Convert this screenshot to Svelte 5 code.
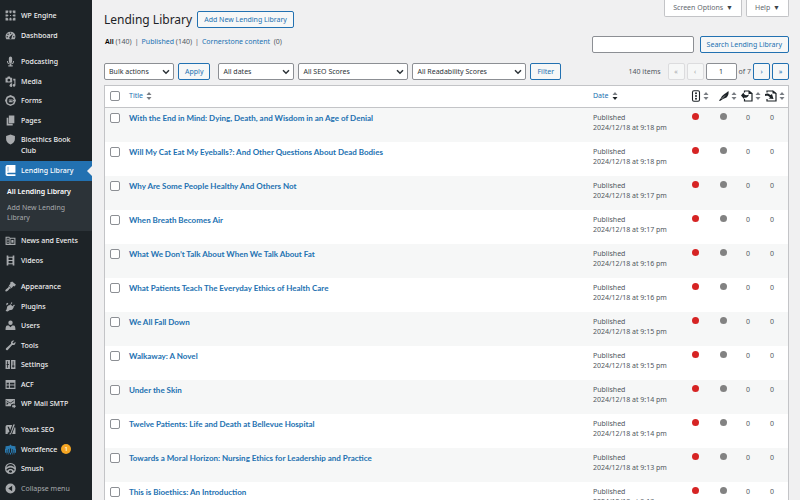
<script>
  const menuGroups = [
    [
      { label: 'WP Engine', icon: 'wpengine' },
      { label: 'Dashboard', icon: 'dashboard' }
    ],
    [
      { label: 'Podcasting', icon: 'mic' },
      { label: 'Media', icon: 'media' },
      { label: 'Forms', icon: 'forms' },
      { label: 'Pages', icon: 'pages' },
      { label: 'Bioethics Book Club', icon: 'shield' },
      {
        label: 'Lending Library',
        icon: 'book',
        current: true,
        children: ['All Lending Library', 'Add New Lending Library']
      },
      { label: 'News and Events', icon: 'news' },
      { label: 'Videos', icon: 'video' }
    ],
    [
      { label: 'Appearance', icon: 'brush' },
      { label: 'Plugins', icon: 'plug' },
      { label: 'Users', icon: 'user' },
      { label: 'Tools', icon: 'wrench' },
      { label: 'Settings', icon: 'settings' },
      { label: 'ACF', icon: 'acf' },
      { label: 'WP Mail SMTP', icon: 'mail' }
    ],
    [
      { label: 'Yoast SEO', icon: 'yoast' },
      { label: 'Wordfence', icon: 'wordfence', badge: 1 },
      { label: 'Smush', icon: 'smush' }
    ]
  ];

  // all drawn on a 20x20 grid
  const icons = {
    wpengine: 'M1 1h5v3l-2 2H1zM8 1h4v3l-1 2H9L8 4zM14 1h5v5h-3l-2-2zM1 8h3l2 1v2l-2 1H1zM9 9h2v2H9zM19 8h-3l-2 1v2l2 1h3zM1 14h3l2 2v3H1zM8 19v-3l1-2h2l1 2v3zM14 19v-3l2-2h3v5z',
    dashboard: 'M10 3a9 9 0 0 0-9 9c0 2 .5 3.500 1.500 5h15c1-1.500 1.500-3 1.500-5a9 9 0 0 0-9-9zm0 1.500a1.200 1.200 0 1 1 0 2.500 1.200 1.200 0 0 1 0-2.500zM5.500 6.500a1.200 1.200 0 1 1 0 2.500 1.200 1.200 0 0 1 0-2.500zm9 0-2.500 6.500a2.200 2.200 0 1 1-3-1zM4 11a1.200 1.200 0 1 1 0 2.500A1.200 1.200 0 0 1 4 11zm12 0a1.200 1.200 0 1 1 0 2.500 1.200 1.200 0 0 1 0-2.500z',
    mic: 'M10 1a3 3 0 0 1 3 3v6a3 3 0 0 1-6 0V4a3 3 0 0 1 3-3zM3.500 9h1.800a4.700 4.700 0 0 0 9.400 0h1.800a6.500 6.500 0 0 1-5.500 6.400V17h3v2H6v-2h3v-1.600A6.500 6.500 0 0 1 3.500 9z',
    media: 'M1 3h3l1-2h4l1 2h3v9H1zm6 2a2.500 2.500 0 1 0 0 5 2.500 2.500 0 0 0 0-5zM15 5h4v12a2.500 2.500 0 1 1-2-2.500V8h-2zM9 14h2v-1h2v4.500A2.300 2.300 0 1 1 9 16z',
    forms: 'M10 0l7 3 3 7-3 7-7 3-7-3-3-7 3-7zM10 4a6 6 0 0 0-6 6 6 6 0 0 0 12 1.500H9V9h7a6 6 0 0 0-6-5zM7 8h7v1.500H8v2h4V10h2v3H7z',
    pages: 'M7 1h10v14H7zM3 5h3v11h8v3H3z',
    shield: 'M10 1l8 2.500V9c0 5-3 8-8 10-5-2-8-5-8-10V3.500z',
    book: 'M3 0h16v14H5.500a1.500 1.500 0 0 0 0 3H19v3H4.500A3.500 3.500 0 0 1 1 16V2.500zM5 3v9h1V3z',
    news: 'M1 3h7l1 2h10v13H1zm2 2v11h5V5zm7 2v9h7V7zM4 7h3v1.500H4zm0 3h3v1.500H4zm0 3h3v1.500H4zM11.500 9h4v5h-4z',
    video: 'M3 1h3v2h8V1h3v18h-3v-2H6v2H3zm3.500 4v4h7V5zm0 6v4h7v-4z',
    brush: 'M9 3l4-2 7 6-3 3-2-1-3 4-5-5 3-3zM7 9l4 4-3 1c-2 3-4 5-6 5s-2-2 0-4l4-3z',
    plug: 'M12 2l1.500 1.500-3 3 3 3 3-3L18 8l-3 3 1 1-3 4-5 1-3 2-4-1 2-3 1-5 4-3 1 1zM2 5l3-2 1 2-3 3z',
    user: 'M10 1a4 4 0 1 1 0 8 4 4 0 0 1 0-8zM4 10h3l3 3 3-3h3c2 0 3 3 3 8H1c0-5 1-8 3-8z',
    wrench: 'M17 1l-3.500 3.500 2 2L19 3c1 4-2 7-6 6l-8 9c-2 2-5-1-3-3l9-8c-1-4 2-7 6-6z',
    settings: 'M1 2h8v16H1zm10 0h8v16h-8zM4 4v5H3v2h1v5h1.500v-5H7V9H5.500V4zm10 0v8h-1v2h1v2h1.500v-2H17v-2h-1.500V4z',
    acf: 'M1 2h18v16H1zm2 5v3h4V7zm6 0v3h8V7zm-6 5v4h4v-4zm6 0v4h8v-4z',
    mail: 'M1 2h17v9l-2-1-5 2v3H1zm1.500 2v1.500L9.500 10l7-4.500V4l-7 4.500zM3 7.500V13l3.500-3zM13 13h3v-2l4 4-4 4v-2h-3z',
    yoast: 'M4 2h9l-3.500 9L7 5H4.500l3.500 8c-.5 2-1 2.500-3 2.500V18H1V5a3 3 0 0 1 3-3zM15 1h3l-6 15c-.7 2-1.500 3-3.500 3.500V17c2-.5 2-1.500 2.500-3zM17.500 6c1 0 1.500 1 1.500 2v10h-6z',
    wordfence: 'M10 1l2 2 7 1v4l1 1v10h-3v-8h-1v8h-2V9h-1v10h-2V8H9v11H7V9H6v10H4v-8H3v8H0V9l1-1V4l7-1zM0 16h20v3H0z',
    smush: 'M10 0a10 10 0 1 1 0 20 10 10 0 0 1 0-20zm0 2a8 8 0 0 0-7.500 6c4-4 11-4 15 0A8 8 0 0 0 10 2zm0 6c-3 0-5.500 1.500-7.500 4l1.200 2.500C7 10 13 10 16.300 14.500l1.200-2.500C15.500 9.500 13 8 10 8zm0 5a3 3 0 0 0-3 3.500l3 1 3-1a3 3 0 0 0-3-3.500z',
    collapse: 'M10 1a9 9 0 1 1 0 18 9 9 0 0 1 0-18zm3 4l-7 5 7 5z'
  };

  const books = [
    ['With the End in Mind: Dying, Death, and Wisdom in an Age of Denial', '9:18'],
    ['Will My Cat Eat My Eyeballs?: And Other Questions About Dead Bodies', '9:18'],
    ['Why Are Some People Healthy And Others Not', '9:17'],
    ['When Breath Becomes Air', '9:17'],
    ['What We Don’t Talk About When We Talk About Fat', '9:16'],
    ['What Patients Teach The Everyday Ethics of Health Care', '9:16'],
    ['We All Fall Down', '9:15'],
    ['Walkaway: A Novel', '9:15'],
    ['Under the Skin', '9:14'],
    ['Twelve Patients: Life and Death at Bellevue Hospital', '9:14'],
    ['Towards a Moral Horizon: Nursing Ethics for Leadership and Practice', '9:13'],
    ['This is Bioethics: An Introduction', '9:13']
  ];
</script>

{#snippet menuIcon(name)}
  <svg class="menu-icon {name}" viewBox="0 0 20 20" aria-hidden="true">
    <path d={icons[name]} fill="currentColor" fill-rule="evenodd" />
  </svg>
{/snippet}

{#snippet sorter(active)}
  <svg class="sorter" class:active viewBox="0 0 6 10" aria-hidden="true">
    <path class="up" d="M3 1l2.500 3h-5z" />
    <path class="down" d="M3 9l2.500-3h-5z" />
  </svg>
{/snippet}

{#snippet picker(name, label, cls)}
  <span class="picker {cls}">
    <select aria-label={name}><option>{label}</option></select>
    <svg viewBox="0 0 8 6" aria-hidden="true"><path d="M1 1.200l3 3 3-3" /></svg>
  </span>
{/snippet}

<div class="admin">
  <nav class="sidebar" aria-label="Main menu">
    {#each menuGroups as group}
      <ul class="menu">
        {#each group as item}
          <li class:current={item.current}>
            <a class="menu-link" href="#top">
              {@render menuIcon(item.icon)}
              <span class="menu-name">{item.label}</span>
              {#if item.badge}<span class="badge">{item.badge}</span>{/if}
            </a>
            {#if item.children}
              <ul class="submenu">
                {#each item.children as child, i}
                  <li><a href="#top" class:selected={i === 0}>{child}</a></li>
                {/each}
              </ul>
            {/if}
          </li>
        {/each}
      </ul>
    {/each}
    <button class="menu-link collapse">
      {@render menuIcon('collapse')}
      <span class="menu-name">Collapse menu</span>
    </button>
  </nav>

  <main>
    <header class="top">
      <div class="heading">
        <div class="title-row">
          <h1>Lending Library</h1>
          <a class="button" href="#top">Add New Lending Library</a>
        </div>
        <ul class="views">
          <li><a class="all" href="#top">All</a> (140)</li>
          <li><a href="#top">Published</a> (140)</li>
          <li><a href="#top">Cornerstone content</a> &nbsp;(0)</li>
        </ul>
      </div>
      <div class="tools">
        <div class="screen-meta">
          <button>Screen Options <span>▼</span></button>
          <button>Help <span>▼</span></button>
        </div>
        <form class="search">
          <input type="search" aria-label="Search Lending Library" />
          <button type="button" class="button">Search Lending Library</button>
        </form>
      </div>
    </header>

    <div class="tablenav">
      {@render picker('Bulk actions', 'Bulk actions', 'bulk')}
      <button class="button">Apply</button>
      {@render picker('Filter by date', 'All dates', 'dates')}
      {@render picker('Filter by SEO score', 'All SEO Scores', 'seo')}
      {@render picker('Filter by readability', 'All Readability Scores', 'readability')}
      <button class="button">Filter</button>
      <div class="pagination">
        <span class="count">140 items</span>
        <button class="page" disabled>«</button>
        <button class="page" disabled>‹</button>
        <input aria-label="Current page" value="1" />
        <span class="of">of 7</span>
        <button class="page">›</button>
        <button class="page">»</button>
      </div>
    </div>

    <table>
      <colgroup>
        <col class="c-check" /><col /><col class="c-date" /><col class="c-score" />
        <col class="c-link" /><col class="c-link" /><col class="c-link" />
      </colgroup>
      <thead>
        <tr>
          <th><input type="checkbox" aria-label="Select all" /></th>
          <th><a href="#top">Title {@render sorter(false)}</a></th>
          <th><a href="#top">Date {@render sorter(true)}</a></th>
          <th>
            <a href="#top" aria-label="SEO score">
              <svg class="col-icon" viewBox="0 0 20 24">
                <rect x="3" y="1.500" width="14" height="21" rx="3" fill="none" stroke="currentColor" stroke-width="2.200" />
                <circle cx="10" cy="6.500" r="2" /><circle cx="10" cy="12" r="2" /><circle cx="10" cy="17.500" r="2" />
              </svg>
              {@render sorter(false)}
            </a>
          </th>
          <th>
            <a href="#top" aria-label="Readability score">
              <svg class="col-icon" viewBox="0 0 20 24">
                <path d="M19 2c1 6-1 10-4 13l-7 3-6 4-2-1 4-5c1-5 6-7 10-10z" />
                <path d="M5 18l7-7" stroke="#fff" stroke-width="1" />
              </svg>
              {@render sorter(false)}
            </a>
          </th>
          <th>
            <a href="#top" aria-label="Outgoing links">
              <svg class="col-icon wide" viewBox="0 0 24 24">
                <path d="M7 5V2h9l6 5v15H7v-4" fill="none" stroke="currentColor" stroke-width="2.400" />
                <path d="M15 1v7h8zM0 11l5-6 1 3c3 3 6 3 10 1-1 5-5 7-9 6l-1 3z" />
              </svg>
              {@render sorter(false)}
            </a>
          </th>
          <th>
            <a href="#top" aria-label="Received links">
              <svg class="col-icon wide" viewBox="0 0 24 24">
                <path d="M4 5V2h12l6 5v15H4v-4" fill="none" stroke="currentColor" stroke-width="2.400" />
                <path d="M15 1v6h8zM0 8c4-2 8-1 11 2l3-2 3 10-10-1 3-2c-2-3-5-4-10-3z" />
              </svg>
              {@render sorter(false)}
            </a>
          </th>
        </tr>
      </thead>
      <tbody>
        {#each books as [title, time]}
          <tr>
            <td><input type="checkbox" aria-label="Select {title}" /></td>
            <td><a class="row-title" href="#top">{title}</a></td>
            <td class="date">Published<br />2024/12/18 at {time} pm</td>
            <td><span class="dot bad"></span></td>
            <td><span class="dot"></span></td>
            <td class="num">0</td>
            <td class="num">0</td>
          </tr>
        {/each}
      </tbody>
    </table>
  </main>
</div>

<style>
  :global(body) {
    background: #f0f0f1;
  }

  .admin,
  .admin * {
    box-sizing: border-box;
  }

  .admin {
    display: flex;
    height: 100vh;
    overflow: hidden;
    font-family: 'Noto Sans', 'Open Sans', sans-serif;
    font-size: 7px;
    line-height: 10px;
    color: #50575e;
  }

  a {
    color: #2271b1;
    text-decoration: none;
  }

  ul {
    list-style: none;
    margin: 0;
    padding: 0;
  }

  button,
  input,
  select {
    font: inherit;
    margin: 0;
  }

  /* sidebar */
  .sidebar {
    flex: 0 0 92px;
    padding-top: 6px;
    background: #1d2327;
  }

  .menu + .menu {
    margin-top: 7px;
  }

  .menu + .menu:last-of-type {
    margin-top: 6px;
  }

  .menu-link {
    position: relative;
    display: flex;
    align-items: flex-start;
    width: 100%;
    min-height: 20px;
    padding: 4px 8px 5px 5px;
    border: 0;
    background: none;
    color: #f0f0f1;
    font-size: 7px;
    font-weight: 500;
    line-height: 11px;
    text-align: left;
  }

  .menu > li:nth-child(even):not(.current) .menu-link {
    min-height: 19px;
    padding-bottom: 4px;
  }

  .menu-icon {
    flex: none;
    width: 11px;
    height: 11px;
    margin-right: 5px;
    color: #a7aaad;
  }

  .current .menu-link {
    background: #2271b1;
    color: #fff;
  }

  .current .menu-link::after {
    content: '';
    position: absolute;
    right: 0;
    top: 5px;
    border: 5px solid transparent;
    border-left: 0;
    border-right: 5px solid #f0f0f1;
  }

  .current .menu-icon {
    color: #fff;
  }

  .wordfence {
    color: #2a7ab0;
  }

  .badge {
    width: 10px;
    height: 10px;
    margin-left: 4px;
    border-radius: 5px;
    background: #f5a623;
    color: #fff;
    font-size: 6px;
    line-height: 10px;
    text-align: center;
  }

  .submenu {
    padding: 3px 0 5px;
    background: #2c3338;
  }

  .submenu a {
    display: block;
    padding: 3px 20px 3px 7px;
    color: #a7aaad;
  }

  .submenu .selected {
    padding-right: 0;
    color: #fff;
    font-weight: 600;
  }

  .collapse {
    color: #a7aaad;
    font-weight: 400;
  }

  /* page header */
  main {
    flex: 1;
    min-width: 0;
    padding: 0 11px 0 12px;
  }

  .top {
    display: flex;
    justify-content: space-between;
  }

  .heading {
    padding-top: 11px;
  }

  .title-row {
    display: flex;
    align-items: center;
    gap: 5px;
  }

  h1 {
    margin: 0;
    color: #1d2327;
    font-size: 12px;
    font-weight: 400;
    line-height: 17px;
  }

  .button {
    height: 17px;
    padding: 0 6px;
    border: 1px solid #2271b1;
    border-radius: 2px;
    background: #f6f7f7;
    color: #2271b1;
    line-height: 15px;
  }

  .views {
    display: flex;
    margin-top: 9px;
    padding-left: 1px;
  }

  .views li + li::before {
    content: '|';
    margin: 0 3px;
  }

  .views .all {
    color: #000;
    font-weight: 600;
  }

  .screen-meta {
    display: flex;
    justify-content: flex-end;
    gap: 4px;
  }

  .screen-meta button {
    height: 17px;
    padding: 0 8px;
    border: 1px solid #c3c4c7;
    border-top: 0;
    border-radius: 0 0 2px 2px;
    background: #fff;
    color: #646970;
  }

  .screen-meta span {
    margin-left: 1px;
    color: #3c434a;
  }

  .search {
    display: flex;
    justify-content: flex-end;
    gap: 6px;
    margin-top: 19px;
  }

  .search input,
  .pagination input,
  select {
    height: 17px;
    border: 1px solid #8c8f94;
    border-radius: 2px;
    background: #fff;
    color: #2c3338;
  }

  .search input {
    width: 102px;
    appearance: none;
  }

  /* filters */
  .tablenav {
    display: flex;
    align-items: center;
    gap: 4px;
    margin: 10px 0 5px;
  }

  .picker {
    display: grid;
    align-items: center;
  }

  .picker > * {
    grid-area: 1 / 1;
  }

  .picker select {
    width: 100%;
    padding: 0 4px;
    appearance: none;
  }

  .picker svg {
    justify-self: end;
    width: 8px;
    height: 6px;
    margin-right: 4px;
    pointer-events: none;
    fill: none;
    stroke: #2c3338;
    stroke-width: 1.5;
  }

  .bulk {
    width: 70px;
  }

  .dates {
    width: 76px;
    margin-left: 4px;
  }

  .seo {
    width: 110px;
  }

  .readability {
    width: 114px;
  }

  .pagination {
    display: flex;
    align-items: center;
    gap: 2px;
    margin-left: auto;
  }

  .count {
    margin-right: 5px;
  }

  .pagination input {
    width: 31px;
    padding: 0;
    text-align: center;
  }

  .page {
    width: 17px;
    height: 17px;
    padding: 0;
    border: 1px solid #2271b1;
    border-radius: 2px;
    background: #f6f7f7;
    color: #2271b1;
  }

  .page:disabled {
    border-color: #dcdcde;
    color: #a7aaad;
  }

  /* list */
  table {
    width: 100%;
    table-layout: fixed;
    border-collapse: separate;
    border-spacing: 0;
    border: 1px solid #c3c4c7;
    background: #fff;
  }

  .c-check {
    width: 24px;
  }

  .c-date {
    width: 95px;
  }

  .c-score {
    width: 28px;
  }

  .c-link {
    width: 24px;
  }

  th {
    height: 22px;
    padding: 0 0 1px;
    border-bottom: 1px solid #c3c4c7;
    font-weight: 400;
    text-align: left;
    vertical-align: middle;
  }

  th a {
    display: flex;
    align-items: center;
    gap: 3px;
  }

  td {
    height: 34px;
    padding: 5px 0;
    vertical-align: top;
  }

  tbody tr:nth-child(odd) {
    background: #f6f7f7;
  }

  input[type='checkbox'] {
    display: block;
    width: 10px;
    height: 10px;
    margin-left: 5px;
    border: 1px solid #8c8f94;
    border-radius: 2px;
    background: #fff;
    appearance: none;
  }

  .row-title {
    font-family: Lato, 'Noto Sans', sans-serif;
    font-size: 8px;
    font-weight: 700;
  }

  .sorter {
    width: 6px;
    height: 10px;
    fill: #787c82;
  }

  .sorter.active .down {
    fill: #1d2327;
  }

  .col-icon {
    width: 10px;
    height: 12px;
    margin-left: 3px;
    color: #1d2327;
    fill: currentColor;
  }

  .col-icon.wide {
    width: 12px;
    margin-left: 1px;
  }

  .col-icon + .sorter {
    margin-left: -1px;
  }

  .dot {
    display: block;
    width: 7px;
    height: 7px;
    margin-left: 4px;
    border-radius: 50%;
    background: #828282;
  }

  .dot.bad {
    background: #d62424;
  }

  .num {
    padding-left: 6px;
  }
</style>
